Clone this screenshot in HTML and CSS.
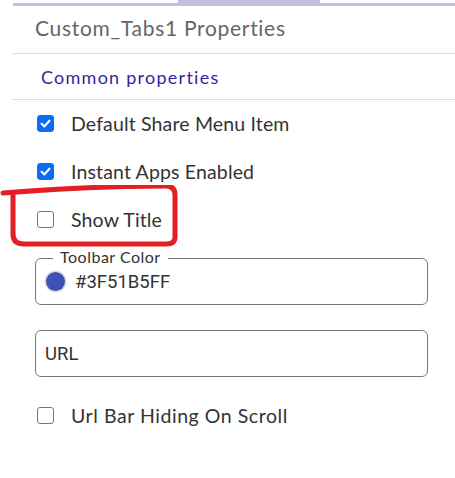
FILE: index.html
```html
<!DOCTYPE html>
<html>
<head>
<meta charset="utf-8">
<link rel="stylesheet" href="styles.css">
</head>
<body>
<div class="panel">
  <div class="tabbar"><div class="tab-active"></div></div>
  <div class="header">Custom_Tabs1 Properties</div>
  <div class="section">Common properties</div>
  <div class="props">
    <label class="row"><span class="cb checked"><svg viewBox="0 0 16 16" width="13" height="13"><path d="M3.2 8.4 L6.5 11.6 L12.8 4.6" fill="none" stroke="#fff" stroke-width="2.6" stroke-linecap="round" stroke-linejoin="round"/></svg></span><span class="lbl">Default Share Menu Item</span></label>
    <label class="row"><span class="cb checked"><svg viewBox="0 0 16 16" width="13" height="13"><path d="M3.2 8.4 L6.5 11.6 L12.8 4.6" fill="none" stroke="#fff" stroke-width="2.6" stroke-linecap="round" stroke-linejoin="round"/></svg></span><span class="lbl">Instant Apps Enabled</span></label>
    <label class="row"><span class="cb"></span><span class="lbl">Show Title</span></label>
    <div class="field color-field">
      <span class="legend">Toolbar Color</span>
      <span class="swatch"></span><span class="value">#3F51B5FF</span>
    </div>
    <div class="field url-field"><span class="value">URL</span></div>
    <label class="row last"><span class="cb"></span><span class="lbl wide">Url Bar Hiding On Scroll</span></label>
  </div>
</div>
<svg class="annot" width="190" height="70" viewBox="0 0 190 70">
  <path d="M3,8 C40,5 110,1 166,1 Q175,1 175,10 L175,52 Q175,59 166,59 L24,59 Q13,59 13,49 L13,10" fill="none" stroke="#e31e24" stroke-width="5" stroke-linecap="round" stroke-linejoin="round"/>
</svg>
</body>
</html>
```
FILE: styles.css
```css
html, body { margin: 0; padding: 0; background: #fff; }
body { font-family: Lato, "Noto Sans", sans-serif; color: #333; width: 455px; height: 478px; overflow: hidden; position: relative; }
.panel { margin-left: 13px; }
.tabbar { height: 6px; position: relative; }
.tabbar::before { content: ""; position: absolute; left: 0; right: 0; top: 3px; height: 3px; background: #c5bee2; }
.tab-active { position: absolute; left: 165px; width: 142px; top: 0; height: 6px; background: #c5bee2; border-radius: 0 0 4px 4px; }
.header { height: 48px; box-sizing: border-box; padding: 0 0 5px 22px; display: flex; align-items: center; font-size: 21px; letter-spacing: 0.7px; color: #666; border-bottom: 1px solid #ddd; }
.section { height: 46px; box-sizing: border-box; padding-left: 28px; display: flex; align-items: center; font-size: 18px; letter-spacing: 1.25px; color: #3b1f9c; border-bottom: 1px solid #ddd; }
.props { padding: 0 27px 0 22px; display: flex; flex-direction: column; }
.row { display: flex; align-items: center; height: 48px; padding-left: 2px; }
.cb { width: 17px; height: 17px; box-sizing: border-box; border: 1.5px solid #777; border-radius: 3px; display: flex; align-items: center; justify-content: center; background: #fff; margin-top: -2px; }
.cb.checked { background: #0c6cf2; border-color: #0c6cf2; }
.lbl { margin-left: 17px; font-size: 19.5px; letter-spacing: 0.15px; color: #333; margin-top: -2px; }
.lbl.wide { letter-spacing: 0.55px; }
.field { border: 1px solid #777; border-radius: 6px; box-sizing: border-box; height: 47px; display: flex; align-items: center; position: relative; }
.color-field { margin-top: 14px; padding-left: 10px; }
.legend { position: absolute; top: -12px; left: 17px; padding: 0 7px 0 7px; background: #fff; font-size: 16px; letter-spacing: 0.5px; color: #333; line-height: 20px; }
.swatch { width: 19px; height: 19px; border-radius: 50%; background: #3f51b5; box-shadow: 0 0 0 1.5px #ddd; }
.value { font-family: Roboto, "Noto Sans", sans-serif; font-size: 18.5px; color: #333; margin-left: 10px; }
.url-field { margin-top: 25px; padding-left: 9px; }
.url-field .value { margin-left: 0; }
.row.last { margin-top: 15px; }
.annot { position: absolute; left: 0; top: 185px; }
```
